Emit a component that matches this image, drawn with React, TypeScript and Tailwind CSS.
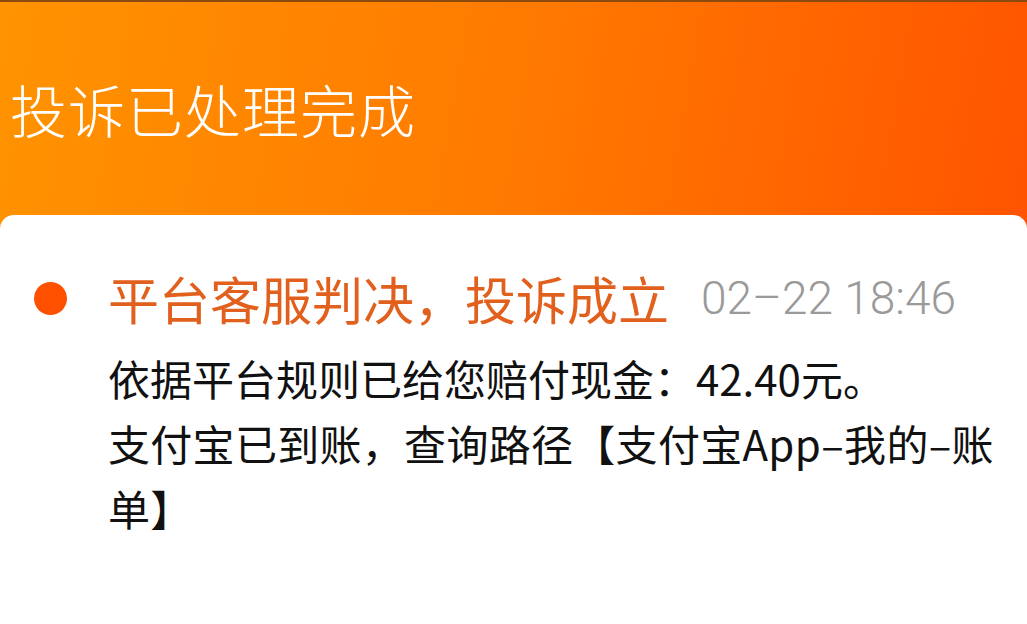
import React from "react";

export default function App() {
  const cjk = { fontFamily: '"Noto Sans CJK SC", "Noto Sans", sans-serif' };
  return (
    <div
      className="w-[1027px] h-[624px] overflow-hidden bg-white flex flex-col"
      style={cjk}
    >
      <div className="h-[232px] shrink-0 bg-[linear-gradient(100deg,#ff9300_0%,#ff7a00_50%,#ff5400_100%)] border-t-2 border-[#8a4a10]">
        <div className="h-[213px] flex items-center pl-[10px]">
          <h1 className="text-[57px] leading-none text-white font-light tracking-[1px]">
            投诉已处理完成
          </h1>
        </div>
      </div>
      <div className="-mt-[17px] relative flex-1 bg-white rounded-t-[14px] pt-[53px] pr-[14px]">
        <div className="flex items-center">
          <div className="ml-[34px] w-[33px] h-[33px] rounded-full bg-[#ff5000] shrink-0" />
          <div className="ml-[41px] text-[51px] leading-[60px] text-[#e2601e]">
            平台客服判决，投诉成立
          </div>
          <div className="ml-[32px] text-[46px] leading-[60px] text-[#9a9a9a] font-light font-['Roboto',sans-serif]">
            02–22 18:46
          </div>
        </div>
        <div className="pl-[108px] mt-[17px] text-[42px] leading-[65px] text-[#111111]">
          <p>依据平台规则已给您赔付现金：42.40元。</p>
          <p className="tracking-[0.3px]">支付宝已到账，查询路径【支付宝App–我的–账单】</p>
        </div>
      </div>
    </div>
  );
}
